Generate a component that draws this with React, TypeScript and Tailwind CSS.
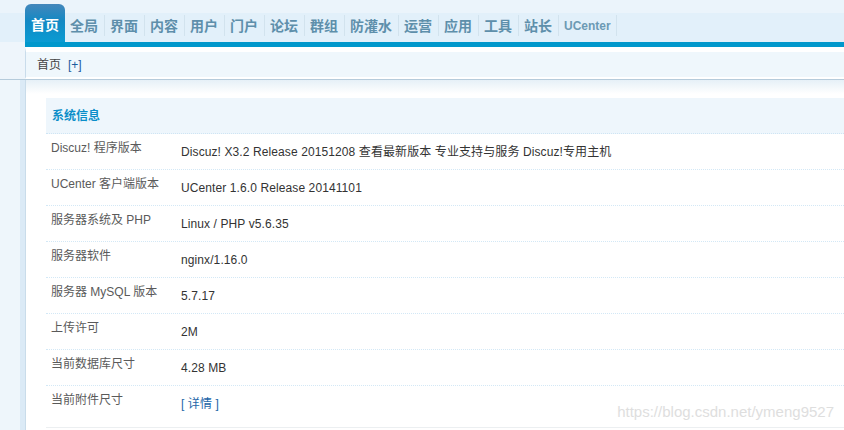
const navItems = ['全局', '界面', '内容', '用户', '门户', '论坛', '群组', '防灌水', '运营', '应用', '工具', '站长'];

const rows: { label: string; value: React.ReactNode }[] = [
  { label: 'Discuz! 程序版本', value: 'Discuz! X3.2 Release 20151208 查看最新版本 专业支持与服务 Discuz!专用主机' },
  { label: 'UCenter 客户端版本', value: 'UCenter 1.6.0 Release 20141101' },
  { label: '服务器系统及 PHP', value: 'Linux / PHP v5.6.35' },
  { label: '服务器软件', value: 'nginx/1.16.0' },
  { label: '服务器 MySQL 版本', value: '5.7.17' },
  { label: '上传许可', value: '2M' },
  { label: '当前数据库尺寸', value: '4.28 MB' },
  { label: '当前附件尺寸', value: <span className="text-[#2366a8]">[ 详情 ]</span> },
];

const font = "font-['Liberation_Sans','Noto_Sans_CJK_SC',sans-serif]";

export default function App() {
  return (
    <div className={`relative flex h-[430px] w-[844px] flex-col overflow-hidden bg-[#eef5fb] ${font}`}>
      {/* Top nav */}
      <div className="flex h-[42px] shrink-0 bg-[linear-gradient(#ebf4fb_0,#ebf4fb_13px,#e2f0fa_13px)]">
        <div className="w-[25px] shrink-0" />
        <div className="flex items-start">
          <div className="mt-[4px] flex h-[38px] w-[40px] items-start justify-center rounded-t-[6px] bg-[linear-gradient(#4487bb,#1389c4_45%,#0b9bd2)] pt-[12px] text-[14px] font-bold leading-[18px] text-white">
            首页
          </div>
          {navItems.map((t) => (
            <div
              key={t}
              className="mt-[15px] flex h-[21px] items-center border-r border-[#d2e3ee] pl-[5px] pr-[6px] text-[14px] font-bold leading-[18px] text-[#5e8fab]"
            >
              {t}
            </div>
          ))}
          <div className="mt-[15px] flex h-[21px] items-center border-r border-[#d2e3ee] pl-[5px] pr-[5px] text-[12px] font-bold text-[#6c9ab4]">
            UCenter
          </div>
        </div>
      </div>
      <div className="ml-[25px] h-[5px] shrink-0 bg-[#0098cc]" />

      {/* Breadcrumb */}
      <div className="ml-[25px] flex h-[32px] shrink-0 items-center border-b-2 border-l border-t-[5px] border-b-white border-l-[#c9dceb] border-t-white bg-[#eff7fc] pl-[11px] text-[12px] text-[#444]">
        <span>首页</span>
        <span className="ml-[7px] text-[#1d5c9c]">[+]</span>
      </div>
      <div className="h-px shrink-0 bg-[#b5cbdb]" />

      {/* Body */}
      <div className="flex min-h-0 flex-1">
        <div className="w-[20px] shrink-0 bg-[#eef6fb]" />
        <div className="w-[5px] shrink-0 bg-[#dbeaf6]" />
        <div className="w-px shrink-0 bg-[#c9dcea]" />
        <div className="flex-1 bg-[linear-gradient(#e6f0f7,#ffffff_14px)] pl-[20px] pt-[18px]">
          <div className="flex h-[36px] items-center border-b border-dotted border-[#cfe5f4] bg-[#eef6fc] pl-[6px] text-[12px] font-bold text-[#0b8ec9]">
            系统信息
          </div>
          {rows.map((r, i) => (
            <div
              key={r.label}
              className={`flex text-[12px] leading-[14px] ${
                i === rows.length - 1 ? 'h-[42px] border-b border-solid border-[#eceff1]' : 'h-[36px] border-b border-dotted border-[#d3e8f6]'
              }`}
            >
              <div className="w-[135px] shrink-0 pl-[5px] pt-[7px] text-[#5a5a5a]">{r.label}</div>
              <div className="pt-[11px] tracking-[0.1px] text-[#333]">{r.value}</div>
            </div>
          ))}
        </div>
      </div>

      <div className="absolute bottom-[9px] right-[10px] font-['Liberation_Sans',sans-serif] text-[15px] leading-[18px] text-[#dedede]">
        https://blog.csdn.net/ymeng9527
      </div>
    </div>
  );
}
